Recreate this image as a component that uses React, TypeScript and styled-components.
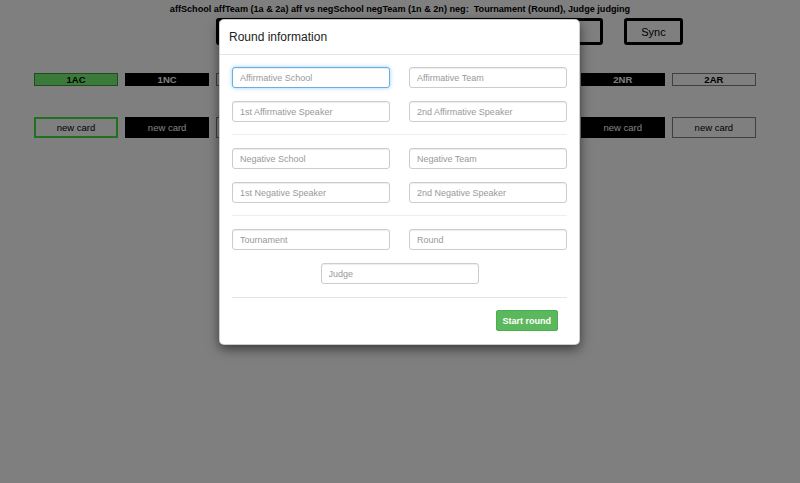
import styled, { createGlobalStyle } from 'styled-components'

const GlobalStyle = createGlobalStyle`
  html, body {
    margin: 0;
    padding: 0;
    background: #fff;
    font-family: 'Liberation Sans', Arial, sans-serif;
  }
  * { box-sizing: border-box; }
`

const Page = styled.div`
  width: 800px;
  height: 483px;
  position: relative;
  overflow: hidden;
  background: #fff;
`

const Heading = styled.div`
  text-align: center;
  font-size: 9.1px;
  font-weight: bold;
  color: #000;
  padding-top: 4px;
  height: 18px;
  white-space: pre;
`

const TopBar = styled.div`
  display: flex;
  padding-left: 216px;
  gap: 21px;
`

const TopButton = styled.button<{ $w: number }>`
  width: ${p => p.$w}px;
  height: 27px;
  border: 3px solid #000;
  border-radius: 3px;
  background: #fff;
  font-family: 'Liberation Sans', Arial, sans-serif;
  font-size: 11px;
  color: #000;
  padding: 0;
`

const Grid = styled.div`
  display: grid;
  grid-template-columns: repeat(8, 84px);
  column-gap: 7.14px;
  padding-left: 34px;
`

const Speeches = styled(Grid)`
  margin-top: 28px;
`

const Cards = styled(Grid)`
  margin-top: 31px;
`

type Kind = 'aff' | 'neg' | 'active'

const Speech = styled.div<{ $kind: Kind }>`
  height: 13px;
  line-height: 11px;
  text-align: center;
  font-size: 9.5px;
  font-weight: bold;
  border: 1px solid
    ${p => (p.$kind === 'active' ? '#3f9a3f' : p.$kind === 'neg' ? '#000' : '#808080')};
  background: ${p => (p.$kind === 'active' ? '#78f478' : p.$kind === 'neg' ? '#000' : '#fff')};
  color: ${p => (p.$kind === 'neg' ? '#fff' : '#000')};
`

const NewCard = styled.button<{ $kind: Kind }>`
  height: 21px;
  padding: 0;
  font-family: 'Liberation Sans', Arial, sans-serif;
  font-size: 9.5px;
  border: ${p => (p.$kind === 'active' ? '2px solid #3ee03e' : p.$kind === 'neg' ? '1px solid #000' : '1px solid #808080')};
  background: ${p => (p.$kind === 'neg' ? '#000' : '#fff')};
  color: ${p => (p.$kind === 'neg' ? '#fff' : '#000')};
`

const Backdrop = styled.div`
  position: absolute;
  inset: 0;
  background: rgba(0, 0, 0, 0.5);
`

const Modal = styled.div`
  position: absolute;
  left: 219px;
  top: 19px;
  width: 361px;
  background: #fff;
  border: 1px solid rgba(0, 0, 0, 0.2);
  border-radius: 5px;
  box-shadow: 0 4px 12px rgba(0, 0, 0, 0.55);
`

const Header = styled.div`
  height: 35px;
  padding: 10px 9px 0;
  border-bottom: 1px solid #e5e5e5;
  font-size: 12px;
  color: #222;
`

const Body = styled.div`
  padding: 12px 12px 13px;
`

const Row = styled.div<{ $center?: boolean }>`
  display: flex;
  gap: 19px;
  justify-content: ${p => (p.$center ? 'center' : 'flex-start')};
  & + & {
    margin-top: 13px;
  }
`

const Divider = styled.hr`
  border: 0;
  border-top: 1px solid #eee;
  margin: 12px 0 13px;
`

const Input = styled.input<{ $focus?: boolean }>`
  width: 158px;
  height: 21px;
  padding: 0 7px;
  border: 1px solid ${p => (p.$focus ? '#66afe9' : '#ccc')};
  border-radius: 3px;
  font-family: 'Liberation Sans', Arial, sans-serif;
  font-size: 9px;
  color: #555;
  outline: none;
  box-shadow: ${p =>
    p.$focus
      ? 'inset 0 1px 1px rgba(0,0,0,.075), 0 0 4px rgba(102,175,233,.6)'
      : 'inset 0 1px 1px rgba(0,0,0,.075)'};
  &::placeholder {
    color: #999;
  }
`

const Footer = styled.div`
  display: flex;
  justify-content: flex-end;
  border-top: 1px solid #e5e5e5;
  margin: 0 12px;
  padding: 12px 9px 13px 0;
`

const StartButton = styled.button`
  height: 21px;
  padding: 0 6px;
  background: #5cb85c;
  border: 1px solid #4cae4c;
  border-radius: 2px;
  color: #fff;
  font-family: 'Liberation Sans', Arial, sans-serif;
  font-size: 9px;
  font-weight: bold;
`

const speeches: { name: string; kind: Kind }[] = [
  { name: '1AC', kind: 'active' },
  { name: '1NC', kind: 'neg' },
  { name: '2AC', kind: 'aff' },
  { name: '2NC', kind: 'neg' },
  { name: '1NR', kind: 'neg' },
  { name: '1AR', kind: 'aff' },
  { name: '2NR', kind: 'neg' },
  { name: '2AR', kind: 'aff' },
]

const App = () => (
  <Page>
    <GlobalStyle />
    <Heading>
      affSchool affTeam (1a &amp; 2a) aff vs negSchool negTeam (1n &amp; 2n) neg:  Tournament (Round), Judge judging
    </Heading>
    <TopBar>
      <TopButton $w={387}>0:00</TopButton>
      <TopButton $w={59}>Sync</TopButton>
    </TopBar>
    <Speeches>
      {speeches.map(s => (
        <Speech key={s.name} $kind={s.kind}>{s.name}</Speech>
      ))}
    </Speeches>
    <Cards>
      {speeches.map(s => (
        <NewCard key={s.name} $kind={s.kind}>new card</NewCard>
      ))}
    </Cards>
    <Backdrop />
    <Modal>
      <Header>Round information</Header>
      <Body>
        <Row>
          <Input $focus placeholder="Affirmative School" />
          <Input placeholder="Affirmative Team" />
        </Row>
        <Row>
          <Input placeholder="1st Affirmative Speaker" />
          <Input placeholder="2nd Affirmative Speaker" />
        </Row>
        <Divider />
        <Row>
          <Input placeholder="Negative School" />
          <Input placeholder="Negative Team" />
        </Row>
        <Row>
          <Input placeholder="1st Negative Speaker" />
          <Input placeholder="2nd Negative Speaker" />
        </Row>
        <Divider />
        <Row>
          <Input placeholder="Tournament" />
          <Input placeholder="Round" />
        </Row>
        <Row $center>
          <Input placeholder="Judge" />
        </Row>
      </Body>
      <Footer>
        <StartButton>Start round</StartButton>
      </Footer>
    </Modal>
  </Page>
)

export default App
